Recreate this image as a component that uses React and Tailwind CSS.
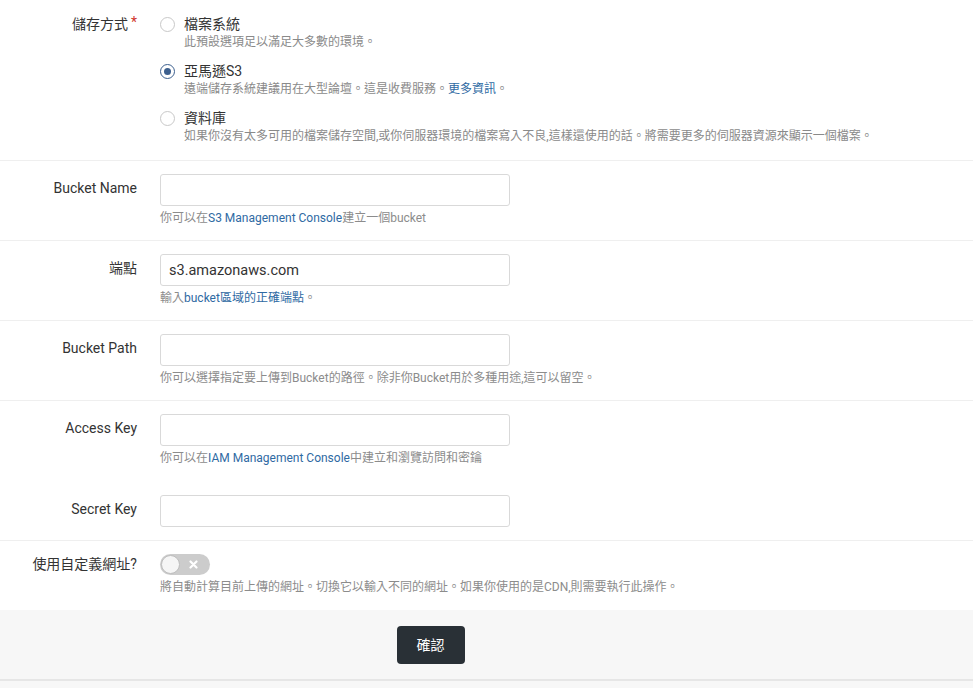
import React, { useState } from 'react';

const font = { fontFamily: 'Roboto, "Noto Sans CJK TC", sans-serif' };

const Radio = ({ checked, title, children, onClick }) => (
    <div className="flex items-start cursor-pointer" onClick={onClick}>
        <div className="h-5 w-[24px] flex items-center">
            <span
                className={
                    checked
                        ? 'w-[15px] h-[15px] rounded-full border border-[#3c5f8e] flex items-center justify-center bg-white'
                        : 'w-[15px] h-[15px] rounded-full border border-[#c8c8c8] bg-white'
                }
            >
                {checked && <span className="w-[7px] h-[7px] rounded-full bg-[#3c5f8e]" />}
            </span>
        </div>
        <div>
            <div className="text-[14px] leading-5 text-[#333]">{title}</div>
            <div className="text-[12px] leading-4 text-[#8a8a8a]">{children}</div>
        </div>
    </div>
);

const Row = ({ label, children, border = true, className = '' }) => (
    <div className={`flex ${border ? 'border-b border-[#efefef]' : ''} ${className}`}>
        <div className="w-[137px] shrink-0 text-right text-[14px] leading-5 text-[#333] pt-[4px]">
            {label}
        </div>
        <div className="ml-[23px] flex-1">{children}</div>
    </div>
);

const TextInput = ({ defaultValue }) => (
    <input
        type="text"
        defaultValue={defaultValue}
        className="block w-[350px] h-[32px] border border-[#d9d9d9] rounded-[3px] px-[8px] text-[14.5px] text-[#333] outline-none bg-white"
        style={font}
    />
);

const Help = ({ children }) => (
    <div className="text-[12px] leading-4 text-[#8c8c8c] mt-[4px]">{children}</div>
);

const Link = ({ children }) => <a className="text-[#2f6aa3]">{children}</a>;

export default function App() {
    const [storage, setStorage] = useState('s3');
    const [custom, setCustom] = useState(false);

    return (
        <div className="w-[973px] h-[688px] bg-white overflow-hidden" style={font}>
            {/* 儲存方式 */}
            <div className="flex border-b border-[#efefef] pt-[14px] pb-[15px] h-[161px]">
                <div className="w-[137px] shrink-0 text-right text-[14px] leading-5 text-[#333]">
                    儲存方式<span className="text-[#d0342c] ml-[3px] relative -top-[2px]">*</span>
                </div>
                <div className="ml-[23px] flex flex-col gap-[11px]">
                    <Radio checked={storage === 'fs'} title="檔案系統" onClick={() => setStorage('fs')}>
                        此預設選項足以滿足大多數的環境。
                    </Radio>
                    <Radio checked={storage === 's3'} title="亞馬遜S3" onClick={() => setStorage('s3')}>
                        遠端儲存系統建議用在大型論壇。這是收費服務。<Link>更多資訊</Link>。
                    </Radio>
                    <Radio checked={storage === 'db'} title="資料庫" onClick={() => setStorage('db')}>
                        如果你沒有太多可用的檔案儲存空間,或你伺服器環境的檔案寫入不良,這樣還使用的話。將需要更多的伺服器資源來顯示一個檔案。
                    </Radio>
                </div>
            </div>

            <Row label="Bucket Name" className="pt-[13px] h-[80px]">
                <TextInput />
                <Help>
                    你可以在<Link>S3 Management Console</Link>建立一個bucket
                </Help>
            </Row>

            <Row label="端點" className="pt-[13px] h-[80px]">
                <TextInput defaultValue="s3.amazonaws.com" />
                <Help>
                    輸入<Link>bucket區域的正確端點</Link>。
                </Help>
            </Row>

            <Row label="Bucket Path" className="pt-[13px] h-[80px]">
                <TextInput />
                <Help>你可以選擇指定要上傳到Bucket的路徑。除非你Bucket用於多種用途,這可以留空。</Help>
            </Row>

            <Row label="Access Key" border={false} className="pt-[13px] h-[80px]">
                <TextInput />
                <Help>
                    你可以在<Link>IAM Management Console</Link>中建立和瀏覽訪問和密鑰
                </Help>
            </Row>

            <Row label="Secret Key" className="pt-[14px] h-[60px]">
                <TextInput />
            </Row>

            <div className="flex pt-[13px] h-[69px]">
                <div className="w-[137px] shrink-0 text-right text-[14px] leading-5 text-[#333]">
                    使用自定義網址?
                </div>
                <div className="ml-[23px]">
                    <button
                        type="button"
                        onClick={() => setCustom(!custom)}
                        className={`relative w-[50px] h-[21px] rounded-full ${custom ? 'bg-[#3c5f8e]' : 'bg-[#cccccc]'} flex items-center`}
                    >
                        <span
                            className={`absolute top-[1px] ${custom ? 'left-[30px]' : 'left-[1px]'} w-[19px] h-[19px] rounded-full bg-[#f5f5f5] border border-[#bdbdbd]`}
                        />
                        <svg className="absolute left-[29px] top-[6px]" width="9" height="9" viewBox="0 0 9 9">
                            <path d="M1.5 1.5 L7.5 7.5 M7.5 1.5 L1.5 7.5" stroke="#fff" strokeWidth="2.2" strokeLinecap="round" />
                        </svg>
                    </button>
                    <div className="text-[12px] leading-4 text-[#8c8c8c] mt-[4px]">
                        將自動計算目前上傳的網址。切換它以輸入不同的網址。如果你使用的是CDN,則需要執行此操作。
                    </div>
                </div>
            </div>

            {/* footer */}
            <div className="bg-[#f7f7f7] h-[100px]">
                <div className="flex justify-center pt-[16px] pb-[15px] border-b-2 border-[#e6e6e6]">
                    <button
                        type="button"
                        className="w-[68px] h-[38px] rounded-[4px] bg-[#293036] text-white text-[14px] ml-[-112px]"
                    >
                        確認
                    </button>
                </div>
            </div>
        </div>
    );
}
